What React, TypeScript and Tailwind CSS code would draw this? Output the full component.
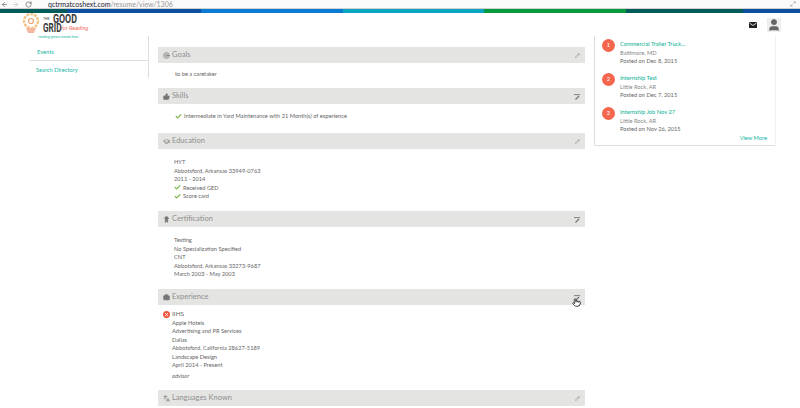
import { ArrowLeft, ArrowRight, RotateCw, Check, User, Pencil, GraduationCap, ThumbsUp, Award, Briefcase, Languages, Target, X, Pointer, Maximize2 } from 'lucide-react';
import type { ReactNode } from 'react';

const colors = [
  { w: 'w-[67px]', bg: 'bg-[#045c5a]' },
  { w: 'w-[134px]', bg: 'bg-[#0b4ea2]' },
  { w: 'w-[142px]', bg: 'bg-[#0a7ad2]' },
  { w: 'w-[141px]', bg: 'bg-[#0aa5c2]' },
  { w: 'w-[142px]', bg: 'bg-[#0a9a3e]' },
  { w: 'w-[117px]', bg: 'bg-[#045c5a]' },
  { w: 'w-[57px]', bg: 'bg-[#0b4ea2]' },
];

const jobs = [
  { n: '1', title: 'Commercial Trailer Truck...', place: 'Baltimore, MD', date: 'Posted on Dec 8, 2015' },
  { n: '2', title: 'Internship Test', place: 'Little Rock, AR', date: 'Posted on Dec 7, 2015' },
  { n: '3', title: 'Internship Job Nov 27', place: 'Little Rock, AR', date: 'Posted on Nov 26, 2015' },
];

function AddIcon() {
  return (
    <svg width="6" height="6" viewBox="0 0 6 6" className="text-[#777]">
      <path d="M0 0.6H6" stroke="currentColor" strokeWidth="0.9" />
      <path d="M1.5 5.5L5 2" stroke="currentColor" strokeWidth="1.2" />
    </svg>
  );
}

function Section({ icon, title, bodyClass, action, overlay, children }: { icon: ReactNode; title: string; bodyClass: string; action?: ReactNode; overlay?: ReactNode; children?: ReactNode }) {
  return (
    <div className="relative">
      <div className="h-4 bg-[#e4e4e3] flex items-center pt-[1px] px-[5px] text-[7.5px] text-[#8f8f8f]">
        <span className="mr-[2px] text-[#777]">{icon}</span>
        <span className="flex-1">{title}</span>
        {action ?? <Pencil size={5} className="text-[#808080]" />}
      </div>
      {overlay}
      <div className={bodyClass}>{children}</div>
    </div>
  );
}

function Tick({ text }: { text: string }) {
  return (
    <div className="flex items-center gap-[2px]">
      <Check size={7} strokeWidth={4} className="text-[#7ab648]" />
      <span>{text}</span>
    </div>
  );
}

export default function App() {
  return (
    <div className="h-[408px] w-[800px] overflow-hidden bg-white font-['Lato',sans-serif] text-[5.7px] leading-[8.5px] text-[#666]">
      <div className="h-[9px] bg-[#fafafa] border-b border-[#d0d0d0] flex items-center pl-[1px] pr-[4px] text-[7px] leading-[8px] overflow-hidden">
        <ArrowLeft size={7} className="text-[#555]" />
        <ArrowRight size={7} className="ml-[4px] text-[#bbb]" />
        <RotateCw size={7} className="ml-[6px] text-[#555]" />
        <span className="ml-[16px] text-[#223]">qctrmatcoshext.com<span className="text-[#999]">/resume/view/1306</span></span>
        <Maximize2 size={6} className="ml-auto text-[#999]" />
      </div>
      <div className="flex h-[4px]">
        {colors.map((c, i) => (
          <div key={i} className={`${c.w} ${c.bg}`} />
        ))}
      </div>

      <div className="h-[23px] flex items-center pl-[22px] pr-[19px]">
        <div className="flex items-start gap-[3px] h-[26px] mt-[3px]">
          <svg width="18" height="21" viewBox="0 0 18 21" className="shrink-0">
            <circle cx="9" cy="8" r="7" fill="none" stroke="#f6c58a" strokeWidth="2.5" strokeDasharray="3 1" />
            <circle cx="9" cy="8" r="2.5" fill="none" stroke="#f0a070" strokeWidth="1.2" />
            <path d="M4 15h10l-2 5H6z" fill="#f4b8a0" />
          </svg>
          <div className="text-[#3a3a3a] font-['Roboto',sans-serif] font-bold pt-[1px] w-[42px]">
            <div className="flex items-center h-[10px] text-[13px] leading-[10px]">
              <span className="w-[10px] text-[3.5px] leading-[4px] font-normal">THE</span>
              <span className="w-[20px] origin-left scale-x-[0.68]">GOOD</span>
            </div>
            <div className="flex items-center h-[9px] text-[12px] leading-[9px]">
              <span className="w-[18px] origin-left scale-x-[0.68]">GRID</span>
              <span className="whitespace-nowrap text-[5.5px] italic font-normal text-[#f0645a]">for Reading</span>
            </div>
            <div className="whitespace-nowrap -ml-[5px] mt-[3px] text-[3.5px] leading-[3px] font-normal text-[#1ab5a5]">reading grows minds here</div>
          </div>
        </div>
        <div className="ml-auto flex items-center gap-[10px]">
          <svg width="8" height="6" viewBox="0 0 8 6">
            <rect width="8" height="6" rx="0.5" fill="#222" />
            <path d="M0.5 1L4 3.5L7.5 1" fill="none" stroke="#fff" strokeWidth="0.8" />
          </svg>
          <div className="w-[14px] h-[14px] bg-[#eee] flex items-end justify-center overflow-hidden">
            <User size={14} fill="#666" stroke="#666" />
          </div>
        </div>
      </div>

      <div className="flex pl-[30px]">
        <div className="w-[119px] h-[42px] border-r border-[#ddd] text-[#1ab5a5] shrink-0">
          <div className="h-[25px] border-b border-[#ddd] flex items-end pb-[4px] pl-[7px]">Events</div>
          <div className="pt-[5px] pl-[6px]">Search Directory</div>
        </div>

        <div className="w-[427px] ml-[9px] mt-[11px] shrink-0">
          <Section icon={<Target size={7} />} title="Goals" bodyClass="h-[25px] pt-[7px] pl-[17px]">
            to be a caretaker
          </Section>
          <Section icon={<ThumbsUp size={7} fill="#777" />} title="Skills" action={<AddIcon />} bodyClass="h-[29px] pt-[8px] pl-[17px]">
            <Tick text="Intermediate in Yard Maintenance with 21 Month(s) of experience" />
          </Section>
          <Section icon={<GraduationCap size={7} />} title="Education" bodyClass="h-[62px] pt-[9px] pl-[16px]">
            <div>HYT</div>
            <div>Abbotsford, Arkansas 33949-0763</div>
            <div>2011 - 2014</div>
            <Tick text="Received GED" />
            <Tick text="Score card" />
          </Section>
          <Section icon={<Award size={7} fill="#777" />} title="Certification" action={<AddIcon />} bodyClass="h-[62px] pt-[9px] pl-[16px]">
            <div>Testing</div>
            <div>No Specialization Specified</div>
            <div>CNT</div>
            <div>Abbotsford, Arkansas 33273-9687</div>
            <div>March 2003 - May 2003</div>
          </Section>
          <Section
            icon={<Briefcase size={7} fill="#777" />}
            title="Experience"
            action={<AddIcon />}
            bodyClass="h-[85px] pt-[5px] pl-[5px]"
            overlay={<Pointer size={9} fill="#fff" stroke="#111" strokeWidth={2} className="absolute right-[4px] top-[9px]" />}
          >
            <div className="flex items-center gap-[2px] text-[6.5px]">
              <span className="w-[7px] h-[7px] rounded-full bg-[#f0563c] flex items-center justify-center">
                <X size={5} strokeWidth={4} className="text-white" />
              </span>
              IIHS
            </div>
            <div className="pl-[9px]">
              <div>Apple Hotels</div>
              <div>Advertising and PR Services</div>
              <div>Dallas</div>
              <div>Abbotsford, California 28627-5189</div>
              <div>Landscape Design</div>
              <div>April 2014 - Present</div>
              <div className="italic mt-[2px]">advisor</div>
            </div>
          </Section>
          <Section icon={<Languages size={7} />} title="Languages Known" bodyClass="h-[2px]" />
        </div>

        <div className="w-[182px] h-[110px] ml-[9px] border-l border-b border-r border-l-[#ddd] border-b-[#ddd] border-r-[#f0f0f0] rounded-b-[2px] shrink-0 pl-[7px] pr-[8px] pt-[3px]">
          <div className="flex flex-col gap-[7.5px]">
            {jobs.map((j) => (
              <div key={j.n} className="flex">
                <div className="w-[13px] h-[13px] rounded-full bg-[#f4674e] text-white flex items-center justify-center shrink-0">{j.n}</div>
                <div className="ml-[5px] mt-[1px]">
                  <div className="text-[#1ab59a] font-medium">{j.title}</div>
                  <div className="text-[#888]">{j.place}</div>
                  <div>{j.date}</div>
                </div>
              </div>
            ))}
          </div>
          <div className="text-right text-[#1ab5a5]">View More</div>
        </div>
      </div>
    </div>
  );
}
